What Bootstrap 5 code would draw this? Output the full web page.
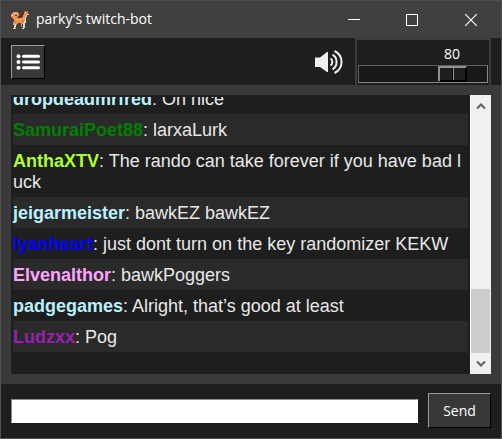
<!DOCTYPE html>
<html lang="en">
<head>
<meta charset="utf-8">
<meta name="viewport" content="width=device-width, initial-scale=1">
<title>parky's twitch-bot</title>
<link href="https://cdn.jsdelivr.net/npm/bootstrap@5.3.0/dist/css/bootstrap.min.css" rel="stylesheet">
<style>
  body { font-family: "Open Sans", "Noto Sans", sans-serif; font-size: 14px; line-height: 20px; color: #fff; background: #1e1e1e; }
  .app-window { border: 1px solid #515151; border-top-color: #4c4c4c; }
  .title-bar { height: 37px; background: #404040; padding-left: 9px; }
  .title-text { font-size: 14px; font-weight: 400; padding-left: 6px; }
  .win-btn { width: 58px; height: 37px; background: none; color: #fff; }
  .win-btn:last-child { width: 60px; }
  .tool-bar { height: 47px; padding: 0 10px; background: #1e1e1e; }
  .raised { border: 1px solid; border-color: #9a9a9a #000 #000 #9a9a9a; background: #383838; color: #fff; }
  .menu-btn { width: 34px; height: 34px; }
  .sound { padding-right: 12px; }
  .volume { width: 136px; padding: 3px 1px 2px; border: 2px solid #3c3c3c; border-bottom: 0; background: #1e1e1e; }
  .volume-value { padding-right: 28px; height: 22px; line-height: 22px; }
  .volume-range { appearance: none; -webkit-appearance: none; height: 18px; margin: 0; border: 1px solid; border-color: #606060 #8a8a8a #8a8a8a #606060; background: #18181a; }
  .volume-range::-webkit-slider-thumb {
    -webkit-appearance: none; width: 29px; height: 16px; border: 1px solid; border-color: #919191 #000 #000 #919191; border-radius: 0;
    background: linear-gradient(90deg, #1e1e1e 13px, #000 13px, #000 14px, #919191 14px, #919191 15px, #1e1e1e 15px);
    box-shadow: inset 1px 1px 0 #919191, inset -1px -1px 0 #000;
  }
  .chat-frame { min-height: 0; padding: 10px; background: #3a3a3a; }
  .chat-log { min-width: 0; padding: 0 2px 22px; border-top: 2px solid #1e1e1e; background: #1e1e1e; font: 18px/21px "Liberation Sans", Arial, sans-serif; color: #e8e8e8; word-break: break-all; }
  .chat-line { padding: 6px 0 4px; }
  .chat-line:nth-child(even) { background: #2a2a2a; }
  .pale { color: #b9f2ff; } .green { color: #008000; } .lime { color: #adff2f; }
  .blue { color: #0000ff; } .pink { color: #ffa5ff; } .violet { color: #9b1fb0; }
  .scroll-rail { width: 21px; background: #f0f0f0; border-left: 1px solid #fff; padding-right: 1px; }
  .scroll-btn { height: 21px; background: none; color: #606060; }
  .scroll-thumb { height: 64px; background: #cdcdcd; }
  .compose { gap: 10px; padding: 9px 10px 10px; background: #1e1e1e; }
  .message-box { height: 24px; min-width: 0; border: 1px solid; border-color: #8e8e8e #fff #fff #8e8e8e; background: #fff; }
  .send-btn { width: 63px; height: 35px; }
</style>
<script src="https://cdn.jsdelivr.net/npm/bootstrap@5.3.0/dist/js/bootstrap.bundle.min.js"></script>
</head>
<body>
<div class="app-window vh-100 d-flex flex-column overflow-hidden">
  <header class="title-bar d-flex align-items-center flex-shrink-0">
    <svg width="20" height="20" viewBox="0 0 20 20" shape-rendering="crispEdges" aria-hidden="true">
      <path fill="#f5924a" d="M2 3h1V2h5v1h1v3H8v1H7v1h5V7h1V5h1V2h1V1h1v1h1V1h1v2h1v2h-3v7h-1v2h-3v-1H8v1H7v1H6v4H3v-1h1v-3H3v-3h1V9H3V8H2V7H1V4h1z"/>
      <path fill="#404040" d="M5 5h2v1H5z"/>
      <path fill="#ffb070" d="M3 3h4v1H3zM6 9h6v1H6z"/>
      <path fill="#c9dde4" d="M17 4h2v1h-2v2h-1v6h-1v5h-1v1h-2v-1h1v-5h1v-2h1V7h1V5h1zM5 14h1v3H5v2H3v-1h1v-3h1zM1 5h2v1H1z"/>
      <path fill="#e8772c" d="M5 11h1v2H5zM12 10h1v3h-1z"/>
      <path fill="#f5924a" d="M11 13h1v4h-1z"/>
      <path fill="#283238" d="M18 3h1v1h-1z"/>
    </svg>
    <h1 class="title-text mb-0 me-auto">parky's twitch-bot</h1>
    <button class="win-btn border-0 p-0 d-flex align-items-center justify-content-center" type="button" aria-label="Minimize"><svg width="12" height="12" stroke="currentColor"><path d="M0 5.500h12"/></svg></button>
    <button class="win-btn border-0 p-0 d-flex align-items-center justify-content-center" type="button" aria-label="Maximize"><svg width="12" height="12" fill="none" stroke="currentColor"><path d="M.5.5h11v11H.5z"/></svg></button>
    <button class="win-btn border-0 p-0 d-flex align-items-center justify-content-center" type="button" aria-label="Close"><svg width="12" height="12" stroke="currentColor" stroke-width="1.200"><path d="M0 0l12 12M12 0L0 12"/></svg></button>
  </header>

  <div class="tool-bar d-flex align-items-stretch flex-shrink-0">
    <button class="menu-btn raised p-0 d-flex align-items-center justify-content-center align-self-center me-auto" type="button" aria-label="Menu">
      <svg width="24" height="16" viewBox="0 0 24 16" fill="#fff"><circle cx="2.500" cy="2.300" r="2"/><circle cx="2.500" cy="8" r="2"/><circle cx="2.500" cy="13.700" r="2"/><rect x="6" y=".8" width="18" height="3" rx="1.500"/><rect x="6" y="6.500" width="18" height="3" rx="1.500"/><rect x="6" y="12.200" width="18" height="3" rx="1.500"/></svg>
    </button>
    <div class="sound d-flex align-items-center">
      <svg width="28" height="24" viewBox="0 0 28 24" aria-hidden="true"><path fill="#eee" d="M0 7.500h5L12 2h1v20h-1l-7-5H0z"/><path fill="none" stroke="#eee" stroke-width="2" d="M15.500 8.500c2.400 1.400 2.400 5.600 0 7M17.500 4.700c5.400 3 5.400 11.600 0 14.600M19.500 1c9.400 4.600 9.400 17.400 0 22"/></svg>
    </div>
    <div class="volume d-flex flex-column">
      <output for="volume" class="volume-value text-end">80</output>
      <input id="volume" class="volume-range w-100" type="range" min="0" max="100" value="80" aria-label="Volume">
    </div>
  </div>

  <main class="chat-frame d-flex flex-grow-1">
    <div class="chat-log flex-grow-1 d-flex flex-column justify-content-end overflow-hidden">
      <div class="chat-line"><b class="pale">dropdeadmrfred</b>: Oh nice</div>
      <div class="chat-line"><b class="green">SamuraiPoet88</b>: larxaLurk</div>
      <div class="chat-line"><b class="lime">AnthaXTV</b>: The rando can take forever if you have bad luck</div>
      <div class="chat-line"><b class="pale">jeigarmeister</b>: bawkEZ bawkEZ</div>
      <div class="chat-line"><b class="blue">lyanheart</b>: just dont turn on the key randomizer KEKW</div>
      <div class="chat-line"><b class="pink">Elvenalthor</b>: bawkPoggers</div>
      <div class="chat-line"><b class="pale">padgegames</b>: Alright, that’s good at least</div>
      <div class="chat-line"><b class="violet">Ludzxx</b>: Pog</div>
    </div>
    <div class="scroll-rail d-flex flex-column flex-shrink-0">
      <button class="scroll-btn border-0 p-0 d-flex align-items-center justify-content-center mb-auto" type="button" aria-label="Scroll up"><svg width="10" height="8" fill="none" stroke="currentColor" stroke-width="2"><path d="M1 6.500l4-4 4 4"/></svg></button>
      <div class="scroll-thumb"></div>
      <button class="scroll-btn border-0 p-0 d-flex align-items-center justify-content-center" type="button" aria-label="Scroll down"><svg width="10" height="8" fill="none" stroke="currentColor" stroke-width="2"><path d="M1 1.500l4 4 4-4"/></svg></button>
    </div>
  </main>

  <form class="compose d-flex align-items-center flex-shrink-0">
    <input id="message" class="message-box flex-grow-1" type="text" aria-label="Message">
    <button class="send-btn raised p-0" type="button">Send</button>
  </form>
</div>
</body>
</html>
